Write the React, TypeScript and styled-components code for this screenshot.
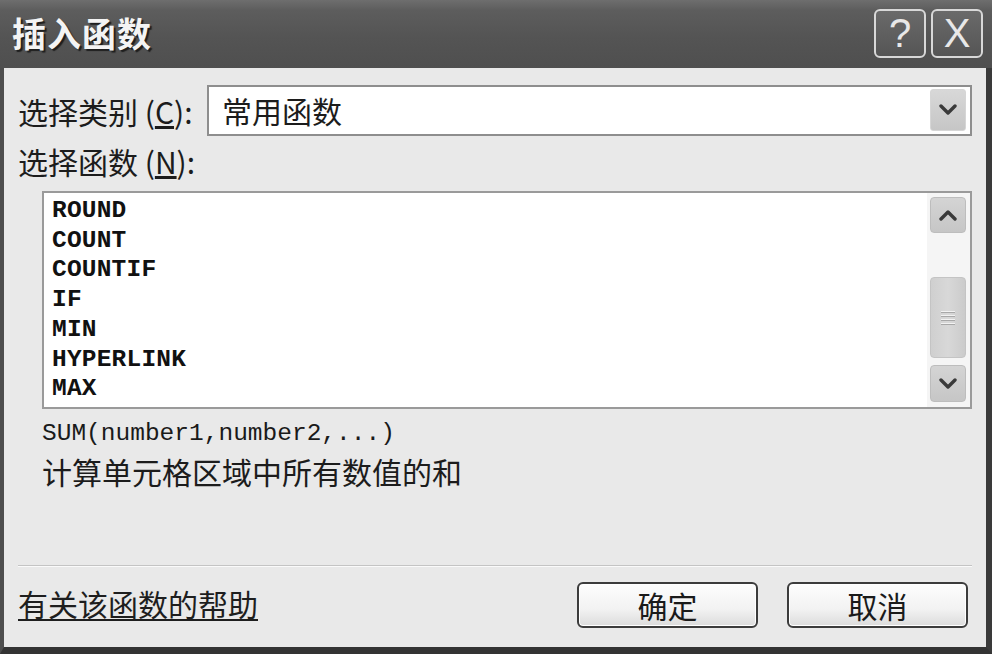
import React from "react";
import styled, { createGlobalStyle } from "styled-components";

const Global = createGlobalStyle`
  html, body { margin: 0; padding: 0; background: #e9e9e9; }
  body { font-family: "Noto Sans CJK SC", "Noto Sans", sans-serif; color: #1c1c1c; }
  #root { width: 992px; height: 654px; }
`;

const Dialog = styled.div`
  width: 992px;
  height: 654px;
  display: flex;
  flex-direction: column;
  overflow: hidden;
`;

const TitleBar = styled.div`
  height: 68px;
  flex: none;
  box-sizing: border-box;
  display: flex;
  align-items: center;
  justify-content: space-between;
  padding: 0 9px 2px 12px;
  background: linear-gradient(#6e6e6e 0, #5d5d5d 15%, #545454 55%, #4f4f4f 100%);
`;

const Title = styled.div`
  font-size: 34px;
  font-weight: 700;
  color: #f4f4f4;
  letter-spacing: 1px;
  text-shadow: 2px 2px 1px #1e1e1e;
  line-height: 1;
`;

const TitleButtons = styled.div`
  display: flex;
  gap: 5px;
`;

const TitleButton = styled.div`
  width: 52px;
  height: 49px;
  box-sizing: border-box;
  border: 2px solid #d8d8d8;
  border-radius: 6px;
  background: linear-gradient(#6a6a6a, #555);
  color: #e8e8e8;
  font-family: "Liberation Sans", sans-serif;
  font-size: 40px;
  font-weight: 300;
  display: flex;
  align-items: center;
  justify-content: center;
  line-height: 1;
`;

const Body = styled.div`
  flex: 1;
  box-sizing: border-box;
  border-left: 4px solid #4e4e4e;
  border-right: 6px solid #3a3a3a;
  border-bottom: 7px solid #333;
  background: #e9e9e9;
  padding: 17px 14px 0 14px;
  display: flex;
  flex-direction: column;
`;

const CategoryRow = styled.div`
  display: flex;
  align-items: center;
  height: 51px;
`;

const Label = styled.div<{ $width?: number }>`
  font-size: 30px;
  line-height: 34px;
  white-space: nowrap;
  width: ${(p) => (p.$width ? `${p.$width}px` : "auto")};
  flex: none;
  u { text-decoration: underline; }
`;

const Combo = styled.div`
  flex: 1;
  height: 51px;
  box-sizing: border-box;
  border: 2px solid #8e8e8e;
  background: #fff;
  display: flex;
  align-items: center;
  justify-content: space-between;
  padding: 3px 4px 4px 13px;
`;

const ComboText = styled.div`
  font-size: 30px;
  line-height: 34px;
`;

const DropButton = styled.div`
  width: 36px;
  height: 42px;
  box-sizing: border-box;
  border: 1px solid #d6d6d6;
  border-radius: 3px;
  background: linear-gradient(#d8d8d8, #c6c6c6);
  display: flex;
  align-items: center;
  justify-content: center;
`;

const FnLabel = styled(Label)`
  margin-top: 8px;
`;

const ListBox = styled.div`
  margin-top: 13px;
  margin-left: 24px;
  height: 218px;
  box-sizing: border-box;
  border: 2px solid #9a9a9a;
  background: #fff;
  display: flex;
`;

const Items = styled.div`
  flex: 1;
  padding: 3px 0 0 8px;
  overflow: hidden;
`;

const Item = styled.div`
  font-family: "Liberation Mono", "DejaVu Sans Mono", monospace;
  font-size: 24.5px;
  font-weight: 700;
  line-height: 29.7px;
  color: #111;
  letter-spacing: 0.2px;
`;

const Scroll = styled.div`
  width: 43px;
  box-sizing: border-box;
  padding: 4px 4px 5px 3px;
  display: flex;
  flex-direction: column;
  background: #f5f5f5;
`;

const ScrollBtn = styled.div<{ $h: number }>`
  height: ${(p) => p.$h}px;
  flex: none;
  box-sizing: border-box;
  border: 1px solid #bdbdbd;
  border-radius: 4px;
  background: linear-gradient(#d4d4d4, #c6c6c6);
  display: flex;
  align-items: center;
  justify-content: center;
`;

const Track = styled.div`
  flex: 1;
  display: flex;
  flex-direction: column;
  padding: 44px 0 7px;
`;

const Thumb = styled.div`
  flex: 1;
  box-sizing: border-box;
  border: 1px solid #c4c4c4;
  border-radius: 4px;
  background: linear-gradient(90deg, #cfcfcf, #d8d8d8 50%, #cbcbcb);
  display: flex;
  flex-direction: column;
  align-items: center;
  justify-content: center;
  gap: 3px;
`;

const Grip = styled.div`
  width: 14px;
  height: 1px;
  background: #f2f2f2;
  box-shadow: 0 1px 0 #a8a8a8;
`;

const Syntax = styled.div`
  margin-top: 12px;
  margin-left: 24px;
  font-family: "Liberation Mono", "DejaVu Sans Mono", monospace;
  font-size: 24.5px;
  line-height: 26px;
  color: #1a1a1a;
`;

const Desc = styled.div`
  margin-left: 24px;
  margin-top: 9px;
  font-size: 30px;
  line-height: 30px;
`;

const Spacer = styled.div`
  flex: 1;
`;

const Separator = styled.div`
  height: 1px;
  background: #c4c4c4;
  border-bottom: 1px solid #fafafa;
  margin-bottom: 15px;
`;

const Footer = styled.div`
  height: 46px;
  margin-bottom: 19px;
  display: flex;
  align-items: center;
  justify-content: space-between;
`;

const HelpLink = styled.div`
  font-size: 30px;
  line-height: 34px;
  text-decoration: underline;
  text-underline-offset: 3px;
  text-decoration-thickness: 2px;
  color: #1e1e1e;
  margin-top: -4px;
`;

const Buttons = styled.div`
  display: flex;
  gap: 29px;
  margin-right: 4px;
`;

const Button = styled.div`
  width: 181px;
  height: 46px;
  box-sizing: border-box;
  border: 2px solid #3c3c3c;
  border-radius: 6px;
  background: linear-gradient(#fdfdfd, #f2f2f2 60%, #dcdcdc);
  box-shadow: inset 0 0 0 1px #fff;
  display: flex;
  align-items: center;
  justify-content: center;
  font-size: 30px;
  color: #1a1a1a;
`;

const Chevron = ({ up }: { up?: boolean }) => (
  <svg width="18" height="12" viewBox="0 0 18 12">
    <polyline
      points={up ? "2,10 9,3 16,10" : "2,2 9,9 16,2"}
      fill="none"
      stroke="#3a3a3a"
      strokeWidth="3.4"
      strokeLinecap="round"
      strokeLinejoin="round"
    />
  </svg>
);

const functions = ["ROUND", "COUNT", "COUNTIF", "IF", "MIN", "HYPERLINK", "MAX"];

export default function App() {
  return (
    <>
      <Global />
      <Dialog>
        <TitleBar>
          <Title>插入函数</Title>
          <TitleButtons>
            <TitleButton>?</TitleButton>
            <TitleButton>X</TitleButton>
          </TitleButtons>
        </TitleBar>
        <Body>
          <CategoryRow>
            <Label $width={189}>
              选择类别 (<u>C</u>):
            </Label>
            <Combo>
              <ComboText>常用函数</ComboText>
              <DropButton>
                <Chevron />
              </DropButton>
            </Combo>
          </CategoryRow>
          <FnLabel>
            选择函数 (<u>N</u>):
          </FnLabel>
          <ListBox>
            <Items>
              {functions.map((f) => (
                <Item key={f}>{f}</Item>
              ))}
            </Items>
            <Scroll>
              <ScrollBtn $h={36}>
                <Chevron up />
              </ScrollBtn>
              <Track>
                <Thumb>
                  <Grip />
                  <Grip />
                  <Grip />
                  <Grip />
                </Thumb>
              </Track>
              <ScrollBtn $h={37}>
                <Chevron />
              </ScrollBtn>
            </Scroll>
          </ListBox>
          <Syntax>SUM(number1,number2,...)</Syntax>
          <Desc>计算单元格区域中所有数值的和</Desc>
          <Spacer />
          <Separator />
          <Footer>
            <HelpLink>有关该函数的帮助</HelpLink>
            <Buttons>
              <Button>确定</Button>
              <Button>取消</Button>
            </Buttons>
          </Footer>
        </Body>
      </Dialog>
    </>
  );
}
